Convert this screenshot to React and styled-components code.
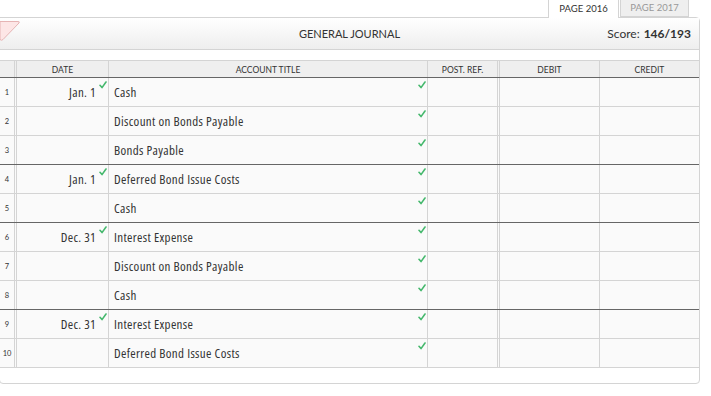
import React from 'react';
import styled, { createGlobalStyle } from 'styled-components';

const GlobalStyle = createGlobalStyle`
  html, body {
    margin: 0;
    padding: 0;
    background: #fff;
  }
  body {
    font-family: Lato, "Open Sans", sans-serif;
    color: #222;
  }
`;

const Page = styled.div`
  width: 711px;
  height: 396px;
  overflow: hidden;
`;

const TabBar = styled.div`
  display: flex;
  justify-content: flex-end;
  align-items: flex-end;
  gap: 1px;
  height: 17px;
  padding-right: 22px;
`;

const Tab = styled.div`
  box-sizing: border-box;
  width: ${p => p.$width}px;
  height: ${p => (p.$active ? 18 : 17)}px;
  margin-bottom: ${p => (p.$active ? -1 : 0)}px;
  border: 1px solid #d4d4d4;
  border-top: none;
  border-bottom: ${p => (p.$active ? 'none' : '1px solid #d4d4d4')};
  background: ${p => (p.$active ? '#fff' : '#efefef')};
  color: ${p => (p.$active ? '#333' : '#999')};
  font-size: 9.5px;
  display: flex;
  align-items: center;
  justify-content: center;
  padding-bottom: ${p => (p.$active ? 2 : 1)}px;
  position: relative;
  z-index: 2;
`;

const Panel = styled.div`
  box-sizing: border-box;
  width: 701px;
  margin-left: -1px;
  border: 1px solid #d4d4d4;
  border-radius: 0 4px 4px 4px;
  background: #fff;
  padding-bottom: 15px;
  position: relative;
`;

const Header = styled.div`
  position: relative;
  height: 31px;
  border-bottom: 1px solid #d4d4d4;
  background: linear-gradient(#ffffff, #eeeeee);
  display: flex;
  align-items: center;
  justify-content: center;
  font-size: 11px;
  color: #333;
`;

const Flag = styled.svg`
  position: absolute;
  left: 0;
  top: 2px;
`;

const Score = styled.div`
  position: absolute;
  right: 8px;
  top: 0;
  bottom: 0;
  display: flex;
  align-items: center;
  font-size: 12px;
  color: #333;
  b {
    margin-left: 4px;
    font-weight: 700;
  }
`;

const Table = styled.div`
  margin-top: 10px;
  border-top: 1px solid #d4d4d4;
`;

const Row = styled.div`
  box-sizing: border-box;
  display: grid;
  grid-template-columns: 17px 92px 319px 72px 100px 99px;
  height: ${p => (p.$head ? 17 : 29)}px;
  background: ${p => (p.$head ? '#efefef' : '#fafafa')};
  border-bottom: 1px solid ${p => (p.$dark ? '#666' : '#d4d4d4')};
`;

const Cell = styled.div`
  position: relative;
  box-sizing: border-box;
  border-right: ${p => (p.$double ? '3px double #d4d4d4' : p.$last ? 'none' : '1px solid #d4d4d4')};
  display: flex;
  align-items: center;
  justify-content: ${p => p.$align || 'flex-start'};
  padding: ${p => p.$pad || '0'};
  font-family: "Open Sans", sans-serif;
  font-stretch: 75%;
  font-size: 13px;
  letter-spacing: 0.35px;
  color: #333;
  white-space: nowrap;
`;

const HeadCell = styled(Cell)`
  justify-content: center;
  font-family: Lato, sans-serif;
  font-stretch: normal;
  letter-spacing: 0;
  font-size: 8.5px;
  color: #333;
  padding-top: 1px;
`;

const Num = styled(Cell)`
  justify-content: center;
  font-family: Lato, sans-serif;
  font-stretch: normal;
  letter-spacing: 0;
  font-size: 7.5px;
  color: #333;
`;

const Check = styled.svg`
  position: absolute;
  top: 3px;
  right: 1px;
`;

const Tick = () => (
  <Check width="8" height="8" viewBox="0 0 8 8">
    <path d="M1 4.3 L3 6.6 L7 1" fill="none" stroke="#45b86d" strokeWidth="1.6" strokeLinecap="round" strokeLinejoin="round" />
  </Check>
);

const rows = [
  { date: 'Jan. 1', account: 'Cash' },
  { account: 'Discount on Bonds Payable' },
  { account: 'Bonds Payable', dark: true },
  { date: 'Jan. 1', account: 'Deferred Bond Issue Costs' },
  { account: 'Cash', dark: true },
  { date: 'Dec. 31', account: 'Interest Expense' },
  { account: 'Discount on Bonds Payable' },
  { account: 'Cash', dark: true },
  { date: 'Dec. 31', account: 'Interest Expense' },
  { account: 'Deferred Bond Issue Costs' },
];

export default function App() {
  return (
    <Page>
      <GlobalStyle />
      <TabBar>
        <Tab $active $width={71}>PAGE 2016</Tab>
        <Tab $width={69}>PAGE 2017</Tab>
      </TabBar>
      <Panel>
        <Header>
          <Flag width="22" height="21" viewBox="0 0 22 21">
            <path d="M0 1.5 L18 1.5 Q20 1.5 19 3 L3 19.5 Q1.5 21 0 19.5 Z" fill="#fde6e6" stroke="#e6b4b4" strokeWidth="1" />
          </Flag>
          GENERAL JOURNAL
          <Score>Score:<b>146/193</b></Score>
        </Header>
        <Table>
          <Row $head $dark>
            <HeadCell $double />
            <HeadCell>DATE</HeadCell>
            <HeadCell>ACCOUNT TITLE</HeadCell>
            <HeadCell $double>POST. REF.</HeadCell>
            <HeadCell>DEBIT</HeadCell>
            <HeadCell $last>CREDIT</HeadCell>
          </Row>
          {rows.map((r, i) => (
            <Row key={i} $dark={r.dark}>
              <Num $double>{i + 1}</Num>
              <Cell $align="flex-end" $pad="0 12px 0 0">
                {r.date}
                {r.date && <Tick />}
              </Cell>
              <Cell $pad="0 0 0 5px">
                {r.account}
                <Tick />
              </Cell>
              <Cell $double />
              <Cell />
              <Cell $last />
            </Row>
          ))}
        </Table>
      </Panel>
    </Page>
  );
}
